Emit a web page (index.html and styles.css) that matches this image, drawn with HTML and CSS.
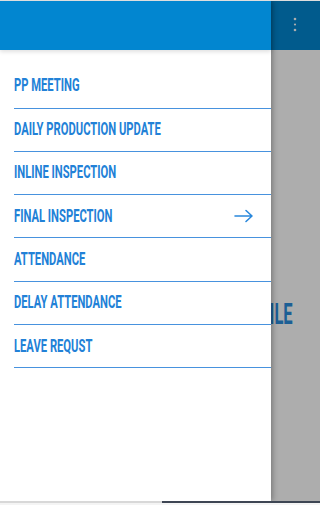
FILE: index.html
```html
<!DOCTYPE html>
<html lang="en">
<head>
  <meta charset="UTF-8">
  <meta name="viewport" content="width=device-width, initial-scale=1.0">
  <title>Menu</title>
  <link rel="stylesheet" href="styles.css">
</head>
<body>
  <div class="top-line"></div>
  <div class="stage">
    <!-- page behind the drawer -->
    <div class="app">
      <div class="app-bar">
        <svg class="more-icon" width="6" height="20" viewBox="0 0 6 20">
          <circle cx="3" cy="4" r="1.3" fill="#fff"/>
          <circle cx="3" cy="9.5" r="1.1" fill="#fff"/>
          <circle cx="3" cy="15" r="1.3" fill="#fff"/>
        </svg>
      </div>
      <div class="app-body">
        <div class="big-title"><span>PROFILE</span></div>
      </div>
    </div>
    <div class="scrim"></div>

    <!-- side drawer -->
    <nav class="drawer">
      <div class="drawer-head"></div>
      <ul class="menu">
        <li class="menu-item"><span class="label">PP MEETING</span></li>
        <li class="menu-item"><span class="label">DAILY PRODUCTION UPDATE</span></li>
        <li class="menu-item"><span class="label">INLINE INSPECTION</span></li>
        <li class="menu-item active">
          <span class="label">FINAL INSPECTION</span>
          <svg class="arrow" width="20" height="14" viewBox="0 0 20 14">
            <path d="M1 7 H18 M12 1.5 L18 7 L12 12.5" fill="none" stroke="#2a88dc" stroke-width="1.6" stroke-linecap="round" stroke-linejoin="round"/>
          </svg>
        </li>
        <li class="menu-item"><span class="label">ATTENDANCE</span></li>
        <li class="menu-item"><span class="label">DELAY ATTENDANCE</span></li>
        <li class="menu-item"><span class="label">LEAVE REQUST</span></li>
      </ul>
    </nav>
  </div>
  <div class="bottom-bar">
    <div class="track"></div>
    <div class="thumb"></div>
  </div>
  <div class="bottom-pad"></div>
</body>
</html>
```

FILE: styles.css
```css
html, body {
  margin: 0;
  padding: 0;
}
body {
  width: 320px;
  height: 505px;
  overflow: hidden;
  display: flex;
  flex-direction: column;
  background: #fff;
  font-family: Roboto, "Liberation Sans", Arial, sans-serif;
}
.top-line {
  height: 1px;
  background: #dedede;
}
.stage {
  flex: 1;
  position: relative;
  overflow: hidden;
}
.app {
  height: 100%;
  display: flex;
  flex-direction: column;
}
.app-bar {
  height: 49px;
  background: #0286d0;
  display: flex;
  justify-content: flex-end;
  align-items: center;
  padding-right: 22px;
}
.more-icon {
  margin-top: -2px;
}
.app-body {
  flex: 1;
  padding-top: 249px;
}
.big-title {
  text-align: right;
  padding-right: 27px;
}
.big-title span {
  display: inline-block;
  font-size: 30px;
  font-weight: 700;
  line-height: 30px;
  color: #2a8ddc;
  transform: scaleX(0.55);
  transform-origin: right center;
}
.scrim {
  position: absolute;
  inset: 0;
  background: rgba(0, 0, 0, 0.32);
}
/* drawer sits over the page */
.drawer {
  position: absolute;
  top: 0;
  left: 0;
  bottom: 0;
  width: 271px;
  background: #fff;
  box-shadow: 2px 0 5px rgba(0, 0, 0, 0.28);
}
.drawer-head {
  height: 49px;
  background: #0286d0;
  box-shadow: 0 2px 4px rgba(0, 0, 0, 0.12);
  position: relative;
}
.menu {
  list-style: none;
  margin: 0;
  padding: 14px 0 0 14px;
}
.menu-item {
  height: 41.3px;
  border-bottom: 1.5px solid #4792de;
  display: flex;
  align-items: center;
  justify-content: space-between;
  padding-right: 17px;
  padding-bottom: 1px;
  box-sizing: content-box;
}
.menu-item:first-child {
  height: 42.5px;
}
.label {
  display: inline-block;
  font-size: 19px;
  font-weight: 700;
  line-height: 20px;
  color: #2281d7;
  white-space: nowrap;
  transform: scaleX(0.59);
  transform-origin: left center;
}
.arrow {
  flex: none;
}
.bottom-bar {
  height: 2px;
  display: flex;
}
.track {
  width: 162px;
  background: #d8d8d8;
}
.thumb {
  flex: 1;
  background: #3d4553;
}
.bottom-pad {
  height: 2px;
  background: #f4f4f4;
}
```
